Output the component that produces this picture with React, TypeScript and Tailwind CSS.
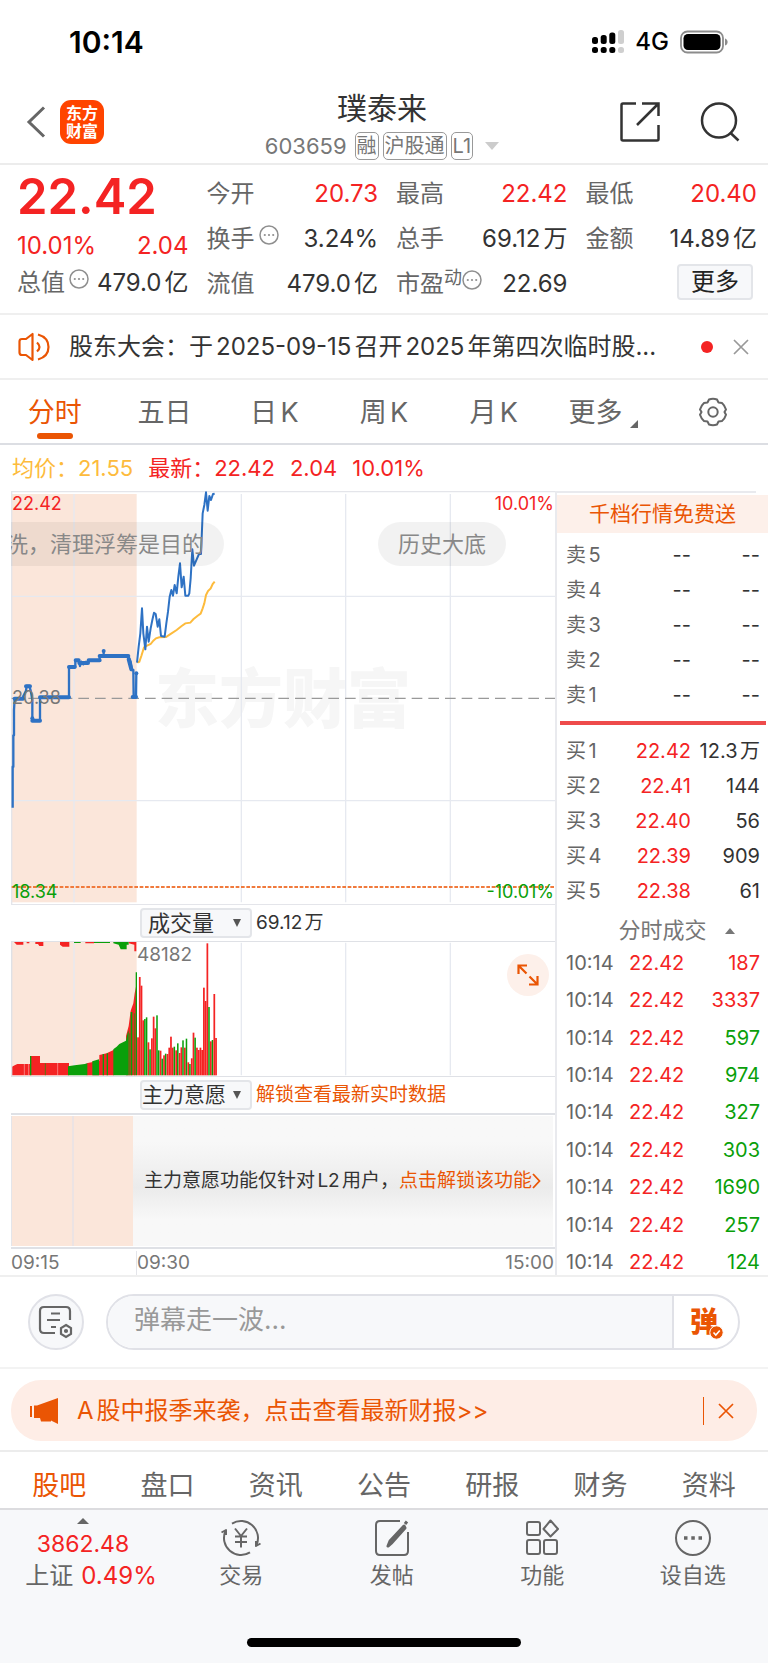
import React from 'react';
import clsx from 'clsx';

const RED = 'text-[#f42323]';
const GREEN = 'text-[#0a9f0a]';

const periods = ['五日', '日K', '周K', '月K'];
const sections = ['股吧', '盘口', '资讯', '公告', '研报', '财务', '资料'];

const asks = ['卖5', '卖4', '卖3', '卖2', '卖1'];

const bids = [
  { label: '买1', price: '22.42', volume: '12.3万' },
  { label: '买2', price: '22.41', volume: '144' },
  { label: '买3', price: '22.40', volume: '56' },
  { label: '买4', price: '22.39', volume: '909' },
  { label: '买5', price: '22.38', volume: '61' },
];

const trades = [
  { volume: '187', up: true },
  { volume: '3337', up: true },
  { volume: '597', up: false },
  { volume: '974', up: false },
  { volume: '327', up: false },
  { volume: '303', up: false },
  { volume: '1690', up: false },
  { volume: '257', up: false },
  { volume: '124', up: false },
];

const auctionLine =
  '38,983 38,860 40,860 40,766 42,766 42,690 44,656 68,656 70,648 78,632 80,618 88,618 92,632 97,660 97,715 102,722 120,722 120,652 207,652 207,561 226,561 226,541 236,541 240,558 244,545 250,553 256,546 266,545 268,541 299,541 299,528 311,528 311,513 311,528 385,528 392,545 396,570 400,570 401,651 408,651 409,580';

const priceLine =
  '411,548 416,500 421,460 426,385 430,460 436,508 441,440 446,485 452,445 457,420 462,398 467,402 473,440 478,418 483,468 494,470 499,430 504,395 509,350 514,330 519,347 524,315 530,340 535,290 540,250 545,322 551,290 556,347 565,347 568,340 572,295 577,208 582,257 590,238 597,222 603,222 608,100 613,75 618,37 623,92 628,48 633,60 639,42 644,41';

const averageLine =
  '412,548 418,545 424,528 432,502 441,497 452,492 460,482 468,475 478,472 498,471 510,463 530,450 545,438 556,430 571,428 580,418 592,408 602,401 608,385 613,370 618,345 624,333 632,325 638,312 644,305';

// r = rising minute, g = falling minute, number = top of the bar
const minuteBars: [string, number][] = [
  ['r', 412], ['r', 231], ['r', 257], ['r', 361], ['g', 357], ['g', 352], ['r', 427], ['g', 448],
  ['r', 415], ['r', 350], ['r', 385], ['g', 346], ['g', 451], ['r', 452], ['g', 476], ['r', 466],
  ['g', 461], ['r', 462], ['r', 443], ['r', 410], ['r', 443], ['g', 440], ['r', 451], ['g', 430],
  ['r', 459], ['r', 442], ['g', 421], ['r', 443], ['g', 416], ['r', 487], ['g', 492], ['r', 475],
  ['r', 398], ['g', 413], ['r', 443], ['r', 450], ['r', 443], ['r', 450], ['r', 263], ['r', 303],
  ['r', 130], ['g', 321], ['r', 424], ['g', 420], ['r', 282], ['r', 414],
];

const MoreDots: React.FC<{ className?: string }> = ({ className }) => (
  <svg className={clsx('h-5 w-5 shrink-0 text-[#8f8f8f]', className)} viewBox="0 0 20 20" fill="none" aria-hidden="true">
    <circle cx="10" cy="10" r="9" stroke="currentColor" strokeWidth="1.5" />
    <circle cx="5.8" cy="10" r="1.1" fill="currentColor" />
    <circle cx="10" cy="10" r="1.1" fill="currentColor" />
    <circle cx="14.2" cy="10" r="1.1" fill="currentColor" />
  </svg>
);

const CloseIcon: React.FC = () => (
  <svg className="h-4 w-4" viewBox="0 0 16 16" stroke="currentColor" strokeWidth="1.7" aria-hidden="true">
    <path d="M1 1l14 14M15 1L1 15" />
  </svg>
);

interface StatProps {
  label: string;
  value: string;
  red?: boolean;
  extra?: React.ReactNode;
}

const Stat: React.FC<StatProps> = ({ label, value, red, extra }) => (
  <div className="flex h-[45px] items-center justify-between whitespace-nowrap">
    <span className="flex items-center text-[#666]">
      {label}
      {extra}
    </span>
    <span className={red ? RED : 'text-[#333]'}>{value}</span>
  </div>
);

const StatusBar: React.FC = () => (
  <div className="flex h-[84px] items-center justify-between pr-10 pl-[69px] text-black">
    <span className="text-[30px] font-semibold">10:14</span>
    <div className="flex items-center gap-[11px]">
      <svg className="h-6 w-8" viewBox="0 0 32 24" aria-hidden="true">
        <g fill="#000">
          <rect x="0" y="7" width="6" height="7" rx="2.5" />
          <rect x="8.7" y="5" width="6" height="9" rx="2.5" />
          <rect x="17.3" y="2.5" width="6" height="11.5" rx="2.5" />
          <rect x="0" y="17" width="6" height="6" rx="2.5" />
          <rect x="8.7" y="17" width="6" height="6" rx="2.5" />
          <rect x="17.3" y="17" width="6" height="6" rx="2.5" />
        </g>
        <g fill="#cfcfcf">
          <rect x="26" y="0" width="6" height="14" rx="2.5" />
          <rect x="26" y="17" width="6" height="6" rx="2.5" />
        </g>
      </svg>
      <span className="text-[24px] font-medium">4G</span>
      <svg className="h-6 w-12" viewBox="0 0 48 24" aria-hidden="true">
        <rect x="1" y="1.5" width="42" height="21" rx="6.5" fill="none" stroke="#8c8c8c" strokeWidth="1.8" />
        <rect x="3.5" y="4" width="37" height="16" rx="4.5" fill="#000" />
        <path d="M45 8.5c3.5 1 3.5 6 0 7z" fill="#8c8c8c" />
      </svg>
    </div>
  </div>
);

const Header: React.FC = () => (
  <header className="grid h-[81px] grid-cols-[1fr_auto_1fr] items-center border-b-2 border-[#ececec] pr-7 pl-6">
    <div className="flex items-center gap-3 pb-1">
      <button type="button" aria-label="返回">
        <svg className="h-8 w-6" viewBox="0 0 24 32" fill="none" stroke="#666" strokeWidth="3" aria-hidden="true">
          <path d="M20 1.5L5 16l15 14.5" />
        </svg>
      </button>
      <div className="flex h-11 w-11 flex-col items-center justify-center rounded-[11px] bg-[#ff4400] text-base leading-[18px] font-bold text-white">
        <span>东方</span>
        <span>财富</span>
      </div>
    </div>
    <div className="flex flex-col items-center pt-1">
      <h1 className="mb-2 text-[30px] leading-8 text-[#333]">璞泰来</h1>
      <div className="flex items-center gap-1 text-[22px] leading-7 text-[#777]">
        <span className="mr-1">603659</span>
        {['融', '沪股通', 'L1'].map((tag) => (
          <span key={tag} className="rounded-[5px] border border-[#999] px-px text-[20px] leading-[26px]">
            {tag}
          </span>
        ))}
        <svg className="ml-2 h-2 w-[14px]" viewBox="0 0 14 8" fill="#ccc" aria-hidden="true">
          <path d="M0 0h14L7 8z" />
        </svg>
      </div>
    </div>
    <div className="flex items-center justify-end gap-10 pb-1">
      <button type="button" aria-label="分享">
        <svg className="h-10 w-10" viewBox="0 0 40 40" fill="none" stroke="#333" strokeWidth="2.5" aria-hidden="true">
          <path d="M16 1.5H3Q1.500 1.500 1.500 3v34q0 1.500 1.500 1.500h34q1.500 0 1.500-1.500V23M22 1.500h16.500V14M38 2L17 23" />
        </svg>
      </button>
      <button type="button" aria-label="搜索">
        <svg className="h-10 w-10" viewBox="0 0 40 40" fill="none" stroke="#333" strokeWidth="2.5" aria-hidden="true">
          <circle cx="19" cy="18.5" r="17" />
          <path d="M30 30.5l8.5 8" />
        </svg>
      </button>
    </div>
  </header>
);

const QuoteSummary: React.FC = () => (
  <section className="grid grid-cols-4 gap-x-[18px] border-b-2 border-[#efefef] pt-1.5 pr-[11px] pb-[7px] pl-[17px] text-[24px] leading-7">
    <div className="whitespace-nowrap">
      <div className={clsx('flex h-[52px] items-center text-[49px] font-semibold', RED)}>22.42</div>
      <div className={clsx('flex h-[46px] items-center justify-between', RED)}>
        <span>10.01%</span>
        <span>2.04</span>
      </div>
      <div className="flex h-7 items-center justify-between">
        <span className="flex items-center text-[#666]">
          总值
          <MoreDots className="mb-2 ml-1" />
        </span>
        <span className="text-[#333]">479.0亿</span>
      </div>
    </div>
    <div>
      <Stat label="今开" value="20.73" red />
      <Stat label="换手" value="3.24%" extra={<MoreDots className="mb-2 ml-1" />} />
      <Stat label="流值" value="479.0亿" />
    </div>
    <div>
      <Stat label="最高" value="22.42" red />
      <Stat label="总手" value="69.12万" />
      <Stat
        label="市盈"
        value="22.69"
        extra={
          <>
            <span className="mb-3 text-[18px]">动</span>
            <MoreDots className="mb-2" />
          </>
        }
      />
    </div>
    <div>
      <Stat label="最低" value="20.40" red />
      <Stat label="金额" value="14.89亿" />
      <div className="flex h-[45px] items-center justify-end pr-1 pb-1">
        <button type="button" className="h-9 w-[76px] rounded border-2 border-[#e3e5e9] bg-[#f7f8fa] text-[#222]">
          更多
        </button>
      </div>
    </div>
  </section>
);

const Notice: React.FC = () => (
  <div className="flex h-[65px] items-center border-b-2 border-[#efefef] pr-[19px] pl-[18px] text-[24px] text-[#333]">
    <svg className="h-8 w-8 shrink-0" viewBox="0 0 32 32" fill="none" stroke="#ea5504" strokeWidth="2.2" strokeLinejoin="round" aria-hidden="true">
      <path d="M14.5 3v26L8 24H4q-2.500 0-2.500-2.500v-11Q1.500 8 4 8h4z" />
      <path d="M19 11.500q5 4.500 0 9M20 3.500q10.500 3 10.500 12.500T20 28.500" />
    </svg>
    <p className="ml-[19px] min-w-0 flex-1 truncate">股东大会：于2025-09-15召开2025年第四次临时股...</p>
    <span className="ml-5 h-3 w-3 shrink-0 rounded-full bg-[#f42323]" />
    <button type="button" aria-label="关闭公告" className="ml-5 shrink-0 text-[#999]">
      <CloseIcon />
    </button>
  </div>
);

const PeriodTabs: React.FC = () => (
  <nav className="grid h-[65px] grid-cols-7 border-b-2 border-[#dcdee3] pt-1 text-[27px] text-[#666]">
    <button type="button" className="relative text-[#ea5504]">
      分时
      <span className="absolute bottom-1 left-1/2 h-1.5 w-9 -translate-x-1/2 rounded-full bg-[#ea5504]" />
    </button>
    {periods.map((period) => (
      <button key={period} type="button">
        {period}
      </button>
    ))}
    <button type="button" className="flex items-center justify-center gap-2">
      更多
      <svg className="mt-5 h-2 w-2" viewBox="0 0 8 8" fill="#666" aria-hidden="true">
        <path d="M8 0v8H0z" />
      </svg>
    </button>
    <button type="button" aria-label="设置" className="flex items-center justify-center pb-1">
      <svg className="h-[30px] w-[30px]" viewBox="0 0 30 30" fill="none" stroke="#666" strokeWidth="2" strokeLinejoin="round" aria-hidden="true">
        <path d="M11 2.500q4-1.500 8 0l1.500 3 3.500.5q2.800 2.500 4 6.500L26.500 15l1.500 2.800q-1.200 4-4 6.200l-3.500.5-1.500 3q-4 1.500-8 0l-1.500-3L6 24q-2.800-2.500-4-6.200L3.500 15 2 12.500Q3.200 8.500 6 6l3.500-.5z" />
        <circle cx="15" cy="15" r="4.7" />
      </svg>
    </button>
  </nav>
);

const PriceChart: React.FC = () => (
  <div className="relative h-[414px] overflow-hidden text-lg leading-5">
    <span className="absolute top-[172px] left-36 text-[64px] leading-[72px] font-black whitespace-nowrap text-[#f6f6f6]">东方财富</span>
    <svg className="absolute inset-0 h-full w-full" viewBox="33 33 1632 1242" preserveAspectRatio="none" fill="none" aria-hidden="true">
      <rect x="35" y="42" width="375" height="1225" fill="#fbe6da" />
      <path d="M222 42v1225M724 42v1225M1037 42v1225M1351 42v1225M35 349h1630M35 962h1630" stroke="#e6e9f0" strokeWidth="4" />
      <path d="M33 35h1632M33 1274h1632M35 35v1240" stroke="#e4e5ea" strokeWidth="4" />
      <path d="M35 655h1630" stroke="#999" strokeWidth="4" strokeDasharray="32 18" />
      <path d="M35 1221h1630" stroke="#f07a3c" strokeWidth="6" strokeDasharray="11 5" />
      <polyline points={averageLine} stroke="#fdbb3c" strokeWidth="6" />
      <polyline points={auctionLine} stroke="#2e72c4" strokeWidth="7" strokeLinejoin="round" />
      <path d="M44 656h25M78 619h12M97 722h23M120 652h87M207 561h17M227 541h9M238 549h26M266 541h33M299 528h86M386 538l8 30M398 651h10" stroke="#2e72c4" strokeWidth="12" strokeLinecap="round" />
      <g fill="#2e72c4">
        <circle cx="311" cy="513" r="6" />
        <circle cx="409" cy="580" r="6" />
        <circle cx="97" cy="715" r="6" />
      </g>
      <polyline points={priceLine} stroke="#2e72c4" strokeWidth="6" strokeLinejoin="round" />
    </svg>
    <span className={clsx('absolute top-[3px] left-px', RED)}>22.42</span>
    <span className={clsx('absolute top-[3px] right-px', RED)}>10.01%</span>
    <span className="absolute top-[197px] left-px text-[#777]">20.38</span>
    <span className={clsx('absolute bottom-[3px] left-px', GREEN)}>18.34</span>
    <span className={clsx('absolute right-px bottom-[3px]', GREEN)}>-10.01%</span>
    <div className="absolute top-[31px] left-0 flex h-11 w-[213px] items-center justify-end overflow-hidden rounded-r-full bg-black/5 pr-5 text-[22px] whitespace-nowrap text-[#888]">
      洗，清理浮筹是目的
    </div>
    <div className="absolute top-[31px] right-[49px] flex h-11 items-center rounded-full bg-black/5 px-5 text-[22px] text-[#888]">历史大底</div>
  </div>
);

const VolumeChart: React.FC = () => (
  <div className="relative h-[136px]">
    <svg className="absolute inset-0 h-full w-full" viewBox="33 123 1632 408" preserveAspectRatio="none" fill="none" aria-hidden="true">
      <rect x="35" y="126" width="375" height="400" fill="#fbe6da" />
      <path d="M222 128v398M724 128v398M1037 128v398M1351 128v398" stroke="#e6e9f0" strokeWidth="4" />
      <g fill="#f42323">
        <path d="M36 526v-26l8-4 8-4h38v-24h30v21h87v37z" />
        <path d="M260 526v-36l18-4v-3h20v-18l22-5 22-11v77z" />
        <path d="M378 526v-118l8-30 6-46 8-22 4-30 6-30v276z" />
        <path d="M42 126h28v8H50zM80 126h8v4h-8zM106 126h24v12h-12l-4-6h-8zM180 126h28v14h-20l-8-6zM256 126h26v4h-26zM386 126h23v28h-6v-20l-17-4z" />
      </g>
      <g fill="#0a9f0a">
        <path d="M204 526v-27l20-3 30-4 8-2v36zM277 526v-42l20-6v48zM308 526v-64h4v64zM320 526v-66h4v66z" />
        <path d="M340 526v-78l10-8 8-8 20-10 4-20 4-12v136zM392 526v-190h5v190zM407 526v-309h4v309zM90 526v-58h4v58z" />
        <path d="M222 126h20v3h-20zM282 126h48v3h-48zM340 126h46v8h-6v14h-18l-6-14-16-4z" />
      </g>
      <path d="M73 492v34M86 492v34M173 488v38" stroke="#fff" strokeOpacity=".6" strokeWidth="2" />
      <path d="M136 490v36M389 400v126M403 340v186" stroke="#0a9f0a" strokeWidth="2" />
      {minuteBars.map(([dir, top], i) => (
        <rect key={i} x={411.5 + i * 5.2} y={top} width={dir === 'r' ? 5.2 : 4.6} height={526 - top} fill={dir === 'r' ? '#f42323' : '#0a9f0a'} />
      ))}
      <path d="M33 124h1632M33 530h1632M35 124v406" stroke="#dfe1e6" strokeWidth="4" />
    </svg>
    <span className="absolute top-1 left-[126px] text-[19px] leading-5 text-[#777]">48182</span>
    <button type="button" aria-label="放大图表" className="absolute top-[13px] right-1.5 flex h-[42px] w-[42px] items-center justify-center rounded-full bg-[#fdf0ea]">
      <svg className="h-[22px] w-[22px]" viewBox="0 0 22 22" fill="none" stroke="#ea5504" strokeWidth="2.2" aria-hidden="true">
        <path d="M10 1.500H1.500V10M2 2l7.500 7.500M12 20.500h8.500V12M20 20l-7.500-7.500" />
      </svg>
    </button>
  </div>
);

interface IndicatorPickerProps {
  id: string;
  value: string;
  wide?: boolean;
}

const IndicatorPicker: React.FC<IndicatorPickerProps> = ({ id, value, wide }) => (
  <div className="relative ml-[129px] h-[30px] w-[112px] shrink-0">
    <select
      id={id}
      aria-label={value}
      defaultValue={value}
      className={clsx(
        'h-full w-full appearance-none rounded border-2 border-[#e3e5e9] bg-[#f7f8fa] leading-6 text-[#333]',
        wide ? 'text-[21px]' : 'pl-1.5 text-[22px]',
      )}
    >
      <option>{value}</option>
    </select>
    <svg className="pointer-events-none absolute top-[11px] right-[11px] h-2 w-2" viewBox="0 0 8 8" fill="#555" aria-hidden="true">
      <path d="M0 0h8L4 8z" />
    </svg>
  </div>
);

const OrderBook: React.FC = () => (
  <aside className="flex flex-col border-l-2 border-[#e9eaee] text-xl whitespace-nowrap text-[#333]">
    <div className="mr-3 border-t-2 border-[#e9eaee]" />
    <a href="#depth" className="mt-0.5 flex h-[38px] items-center justify-center bg-[#fdf0ea] text-[21px] leading-7 text-[#ea5504]">
      千档行情免费送
    </a>
    <table className="mt-1 mr-2 ml-[9px]">
      <tbody>
        {asks.map((label) => (
          <tr key={label} className="h-[35px] leading-7">
            <td className="text-[#666]">{label}</td>
            <td className="text-right">--</td>
            <td className="w-[69px] text-right">--</td>
          </tr>
        ))}
      </tbody>
    </table>
    <div className="mt-[9px] mr-0.5 mb-2 ml-[3px] h-1 bg-[#ee4b4b]" />
    <table className="mr-2 ml-[9px]">
      <tbody>
        {bids.map((bid) => (
          <tr key={bid.label} className="h-[35px] leading-7">
            <td className="text-[#666]">{bid.label}</td>
            <td className={clsx('text-right', RED)}>{bid.price}</td>
            <td className="w-[69px] text-right">{bid.volume}</td>
          </tr>
        ))}
      </tbody>
    </table>
    <button type="button" className="flex h-9 shrink-0 items-end justify-center gap-[18px] pl-7 text-[22px] leading-7 text-[#777]">
      分时成交
      <svg className="mb-2.5 h-1.5 w-2.5" viewBox="0 0 10 6" fill="#777" aria-hidden="true">
        <path d="M0 6h10L5 0z" />
      </svg>
    </button>
    <div className="h-0 grow overflow-hidden pr-2 pl-[9px]">
      <table className="h-[337px] w-full">
        <tbody>
          {trades.map((trade) => (
            <tr key={trade.volume} className="leading-7">
              <td className="w-[63px] text-[#666]">10:14</td>
              <td className={RED}>22.42</td>
              <td className={clsx('text-right', trade.up ? RED : GREEN)}>{trade.volume}</td>
            </tr>
          ))}
        </tbody>
      </table>
    </div>
  </aside>
);

const Charts: React.FC = () => (
  <main>
    <div className="flex h-[46px] items-center gap-[15px] pl-3 text-[22px] whitespace-nowrap">
      <span className="text-[#fdbb3c]">均价：21.55</span>
      <span className={RED}>最新：22.42</span>
      <span className={RED}>2.04</span>
      <span className={RED}>10.01%</span>
    </div>
    <div className="grid grid-cols-[minmax(0,1fr)_213px] border-b-2 border-[#efefef]">
      <div className="pl-[11px] text-[19px] leading-6">
        <PriceChart />
        <div className="flex h-9 items-center gap-1">
          <IndicatorPicker id="volume" value="成交量" />
          <span className="text-[#333]">69.12万</span>
        </div>
        <VolumeChart />
        <div className="flex h-9 items-center gap-1">
          <IndicatorPicker id="intent" value="主力意愿" wide />
          <a href="#unlock" className="text-[#ea5504]">解锁查看最新实时数据</a>
        </div>
        <div className="flex h-[136px] border-t-2 border-b-2 border-[#dfe1e6] py-px pr-0.5">
          <div className="flex w-[122px] shrink-0 border-l border-[#e4e5ea] bg-[#fbe6da]">
            <div className="w-[62px] border-r-2 border-[#ece3e3]" />
          </div>
          <div className="flex min-w-0 flex-1 items-center bg-linear-to-b from-[#f8f8f8] from-20% via-[#ebebeb] via-55% to-[#f8f8f8] to-80% pl-[11px] whitespace-nowrap text-[#333]">
            主力意愿功能仅针对L2用户，
            <a href="#unlock" className="flex items-center text-[#ea5504]">
              点击解锁该功能
              <svg className="h-4 w-[9px]" viewBox="0 0 9 16" fill="none" stroke="currentColor" strokeWidth="1.8" aria-hidden="true">
                <path d="M1 1l6.500 7L1 15" />
              </svg>
            </a>
          </div>
        </div>
        <div className="flex h-[26px] items-end text-[#777]">
          <span className="w-[125px]">09:15</span>
          <span className="flex-1 border-l border-[#e4e5ea]">09:30</span>
          <span className="pr-px">15:00</span>
        </div>
      </div>
      <OrderBook />
    </div>
  </main>
);

const CommentBar: React.FC = () => (
  <div className="flex h-[92px] items-center gap-[22px] border-b-2 border-[#f3f3f3] pr-7 pl-7">
    <button type="button" aria-label="弹幕设置" className="flex h-14 w-14 shrink-0 items-center justify-center rounded-full border-2 border-[#e0e1e7] bg-[#f7f8fa]">
      <svg className="h-9 w-9" viewBox="0 0 36 36" fill="none" stroke="#666" strokeWidth="2.2" aria-hidden="true">
        <path d="M17 29H6q-4 0-4-4V7q0-4 4-4h22q4 0 4 4v9M13 9.500h9M9 16h13M13 23h5" />
        <path d="M28 21l5 3v6l-5 3-5-3v-6z" />
        <circle cx="28" cy="27" r="1" />
      </svg>
    </button>
    <div className="flex h-14 min-w-0 flex-1 overflow-hidden rounded-full border-2 border-[#e0e1e7]">
      <input
        type="text"
        aria-label="弹幕"
        placeholder="弹幕走一波..."
        className="min-w-0 flex-1 bg-[#f7f8fa] pb-1 pl-[26px] text-[26px] leading-8 outline-none placeholder:text-[#999]"
      />
      <button type="button" className="relative w-[66px] shrink-0 border-l-2 border-[#e0e1e7] pr-1 text-[28px] font-black text-[#ea5504]">
        弹
        <svg className="absolute right-[14px] bottom-2 h-[15px] w-[15px]" viewBox="0 0 15 15" fill="none" aria-hidden="true">
          <circle cx="7.5" cy="7.5" r="6.7" fill="#ea5504" stroke="#fff" strokeWidth="1" />
          <path d="M4.500 7.500l2.300 2.500 4-4.500" stroke="#fff" strokeWidth="1.6" />
        </svg>
      </button>
    </div>
  </div>
);

const Promo: React.FC = () => (
  <div className="border-b-2 border-[#ececec] px-[11px] pt-[11px] pb-[9px]">
    <div className="flex h-[61px] items-center rounded-[30px] bg-[#feede6] pr-[23px] pl-[19px] text-[#ea5504]">
      <svg className="h-[26px] w-7 shrink-0" viewBox="0 0 28 26" fill="currentColor" aria-hidden="true">
        <path d="M0 8h2v11H0zM4 7.500h3L28 0v26l-7-3.500v1H11l-1-3.500H4z" />
      </svg>
      <a href="#reports" className="ml-[19px] flex-1 truncate text-[24px] leading-8">A股中报季来袭，点击查看最新财报&gt;&gt;</a>
      <span className="mr-[14px] h-7 w-px bg-[#ea5504]" />
      <button type="button" aria-label="关闭">
        <CloseIcon />
      </button>
    </div>
  </div>
);

const actions = [
  {
    label: '交易',
    icon: (
      <>
        <path d="M11 5.600A17 17 0 0 1 35.500 27M29 34.400A17 17 0 0 1 4.500 13M0.500 14.500l4.500-2.500v5M39.500 25.500L35 28v-5" />
        <path d="M14 10.500l6 7.500 6-7.500M20 18v11.500M14 18.500h12M14 24h12" />
      </>
    ),
  },
  {
    label: '发帖',
    icon: (
      <>
        <path d="M28 3H8Q4 3 4 7v26q0 4 4 4h24q4 0 4-4V14" />
        <path d="M32 8L18 23l-2 5 4-3.500L33 10zM35 3.500l-2 2.500" fill="currentColor" strokeWidth="3" />
      </>
    ),
  },
  {
    label: '功能',
    icon: (
      <>
        <rect x="5" y="4" width="13" height="13" rx="2" />
        <rect x="5" y="22" width="13" height="14" rx="2" />
        <rect x="22" y="22" width="13" height="14" rx="2" />
        <path d="M28.500 2.500L36 11l-7.500 7.500L21.500 11z" />
      </>
    ),
  },
  {
    label: '设自选',
    icon: (
      <>
        <circle cx="20" cy="20" r="17" />
        <path d="M11 20h3.500M18.300 20h3.500M25.500 20h3.500" strokeWidth="3.5" />
      </>
    ),
  },
];

const BottomBar: React.FC = () => (
  <footer className="bg-[#f7f8fa]">
    <div className="grid h-[128px] grid-cols-[166px_repeat(4,minmax(0,1fr))] pt-2 text-[22px] leading-7 text-[#666]">
      <button type="button" className={clsx('flex flex-col items-center text-[23px] whitespace-nowrap', RED)}>
        <svg className="mb-1.5 h-1.5 w-3" viewBox="0 0 12 6" fill="#666" aria-hidden="true">
          <path d="M0 6h12L6 0z" />
        </svg>
        <span className="mb-1">3862.48</span>
        <span className="flex gap-2 pl-4 text-[24px]">
          <span className="text-[#666]">上证</span>
          <span>0.49%</span>
        </span>
      </button>
      {actions.map(({ label, icon }) => (
        <button key={label} type="button" className="flex flex-col items-center">
          <svg className="mb-[3px] h-10 w-10" viewBox="0 0 40 40" fill="none" stroke="currentColor" strokeWidth="2" strokeLinejoin="round" aria-hidden="true">
            {icon}
          </svg>
          {label}
        </button>
      ))}
    </div>
    <div className="flex h-[25px] items-start justify-center">
      <span className="h-[9px] w-[274px] rounded-full bg-black" />
    </div>
  </footer>
);

const App: React.FC = () => (
  <div className="min-h-screen bg-white font-[Inter,'Noto_Sans_CJK_SC',sans-serif] [text-autospace:normal]">
    <StatusBar />
    <Header />
    <QuoteSummary />
    <Notice />
    <PeriodTabs />
    <Charts />
    <CommentBar />
    <Promo />
    <nav className="grid h-[58px] grid-cols-7 border-b-2 border-[#dcdcdf] px-[5px] pt-3 text-[27px] text-[#666]">
      {sections.map((name, i) => (
        <button key={name} type="button" className={i === 0 ? 'text-[#ea5504]' : undefined}>
          {name}
        </button>
      ))}
    </nav>
    <BottomBar />
  </div>
);

export default App;
